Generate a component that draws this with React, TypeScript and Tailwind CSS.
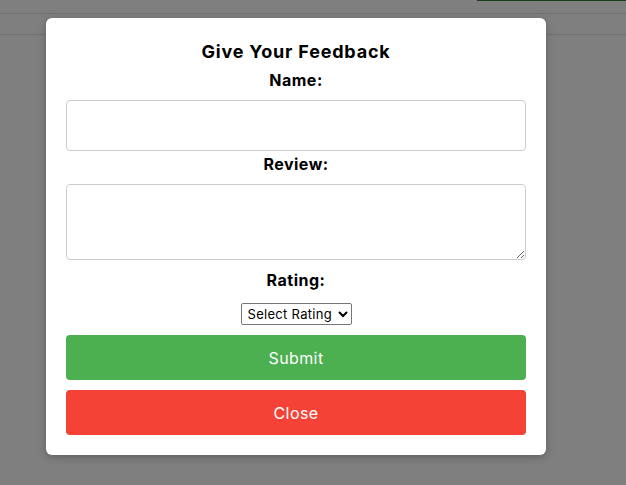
import React from "react";

export default function App() {
  return (
    <div
      className="relative w-[626px] h-[485px] overflow-hidden bg-white"
      style={{ fontFamily: "Inter, 'Noto Sans', sans-serif" }}
    >
      {/* underlying page */}
      <div className="absolute inset-0">
        <div className="ml-[477px] h-[1px] bg-[#2e7d32]" />
        <div className="mt-[12px] h-[1px] bg-[#e2e2e2]" />
        <div className="mt-[20px] h-[1px] bg-[#e2e2e2]" />
      </div>
      {/* overlay */}
      <div className="absolute inset-0 bg-black/50 flex justify-start items-start pt-[18px] pl-[46px]">
        <div className="w-[500px] bg-white rounded-[6px] shadow-[0_2px_8px_rgba(0,0,0,0.25)] p-[20px] flex flex-col items-center text-black">
          <h2 className="text-[18px] leading-[27px] font-bold tracking-[0.8px]">Give Your Feedback</h2>
          <label className="mt-[3px] text-[16px] leading-[24px] font-bold tracking-[0.5px]">Name:</label>
          <input
            type="text"
            className="mt-[8px] w-full h-[51px] border border-[#cccccc] rounded-[4px] outline-none"
          />
          <label className="mt-[1px] text-[16px] leading-[24px] font-bold tracking-[0.5px]">Review:</label>
          <textarea className="mt-[8px] w-full h-[76px] border border-[#cccccc] rounded-[4px] outline-none block" />
          <label className="mt-[8px] text-[16px] leading-[24px] font-bold tracking-[0.5px]">Rating:</label>
          <select className="mt-[11px] h-[22px] w-[111px] border border-[#767676] rounded-[2px] text-[13px] px-[2px] bg-white text-black appearance-auto tracking-[0.3px]">
            <option>Select Rating</option>
          </select>
          <button className="mt-[10px] w-full h-[45px] rounded-[4px] bg-[#4caf50] text-white text-[16px] tracking-[0.4px]">
            Submit
          </button>
          <button className="mt-[10px] w-full h-[45px] rounded-[4px] bg-[#f44336] text-white text-[16px] tracking-[0.4px]">
            Close
          </button>
        </div>
      </div>
    </div>
  );
}
